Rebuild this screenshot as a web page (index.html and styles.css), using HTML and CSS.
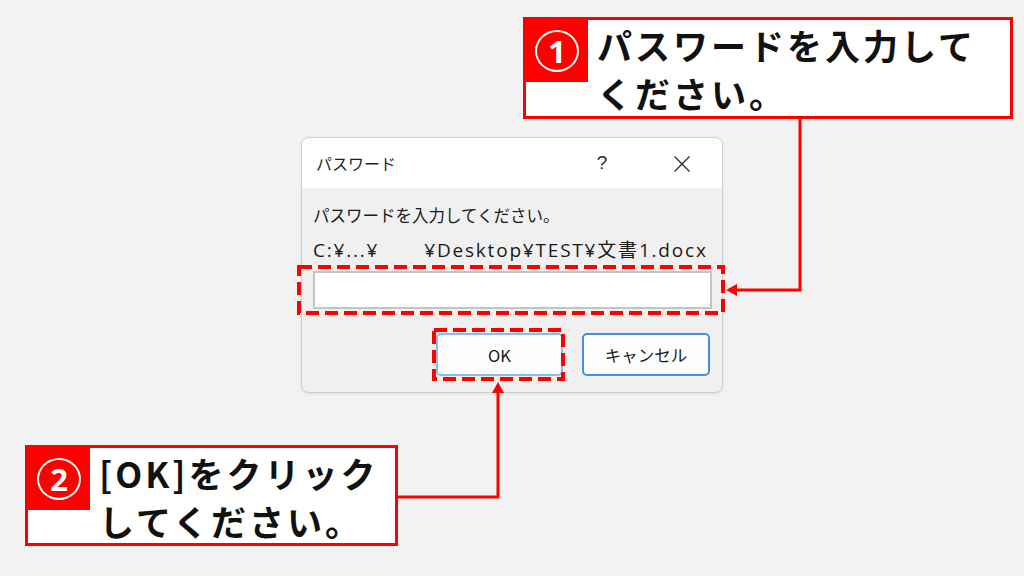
FILE: index.html
```html
<!DOCTYPE html>
<html lang="ja">
<head>
<meta charset="UTF-8">
<meta name="viewport" content="width=device-width, initial-scale=1.0">
<title>パスワード</title>
<link rel="stylesheet" href="styles.css">
</head>
<body>

<div class="stage">

  <div class="dialog">
    <div class="titlebar">
      <span class="title">パスワード</span>
      <span class="ctrl help">?</span>
      <span class="ctrl close">
        <svg width="18" height="18" viewBox="0 0 18 18">
          <path d="M1.5 1.5 L16.5 16.5 M16.5 1.5 L1.5 16.5" stroke="#2b2b2b" stroke-width="1.4" fill="none"/>
        </svg>
      </span>
    </div>
    <div class="content">
      <p class="msg">パスワードを入力してください。</p>
      <p class="msg path">C:¥...¥<span class="hidden-user">¥Desktop¥TEST¥文書1.docx</span></p>
      <input type="password" class="pw-field">
      <div class="buttons">
        <button class="btn btn-ok">OK</button>
        <button class="btn btn-cancel">キャンセル</button>
      </div>
    </div>
  </div>

  <div class="callout callout-1">
    <div class="badge"><span class="num">1</span></div>
    <p class="callout-text">パスワードを入力して<br>ください。</p>
  </div>

  <div class="callout callout-2">
    <div class="badge"><span class="num">2</span></div>
    <p class="callout-text">[OK]をクリック<br>してください。</p>
  </div>

  <!-- annotation marks over the dialog -->
  <svg class="marks" width="1024" height="576" viewBox="0 0 1024 576">
    <rect x="299" y="267" width="424" height="46" fill="none" stroke="#ff0000" stroke-width="4" stroke-dasharray="13 6"/>
    <rect x="434" y="330" width="129" height="49" fill="none" stroke="#ff0000" stroke-width="4" stroke-dasharray="13 6"/>

    <polyline points="800,119 800,290 734,290" fill="none" stroke="#ff0000" stroke-width="3"/>
    <polygon points="726,290 737,284 737,296" fill="#ff0000"/>

    <polyline points="398,497 498,497 498,390" fill="none" stroke="#ff0000" stroke-width="3"/>
    <polygon points="498,382 492,393 504,393" fill="#ff0000"/>
  </svg>

</div>

</body>
</html>
```

FILE: styles.css
```css
* {
  padding: 0;
  margin: 0;
  box-sizing: border-box;
}

body {
  background-color: #f2f2f2;
  font-family: "Noto Sans CJK JP", "Noto Sans", sans-serif;
}

.stage {
  position: relative;
  width: 1024px;
  height: 576px;
  overflow: hidden;
  padding: 137px 0 0 301px;
}

/* dialog */

.dialog {
  width: 422px;
  height: 256px;
  border: 1px solid #cfcfcf;
  border-radius: 8px;
  background-color: #f0f0f0;
  overflow: hidden;
  box-shadow: 0 1px 3px rgba(0, 0, 0, 0.08);
}

.titlebar {
  height: 50px;
  background-color: #fff;
  display: flex;
  align-items: center;
  padding-left: 14px;
}

.title {
  font-size: 16px;
  color: #1f1f1f;
  margin-right: auto;
}

.ctrl {
  width: 80px;
  display: flex;
  justify-content: center;
  align-items: center;
  color: #2b2b2b;
}

.help {
  font-size: 19px;
  font-family: "Liberation Sans", sans-serif;
}

.close svg {
  display: block;
  margin-top: 2px;
}

.content {
  padding: 10px 10px 0 11px;
}

.msg {
  font-size: 16.5px;
  line-height: 35px;
  color: #1a1a1a;
  white-space: nowrap;
}

.path {
  font-family: "Open Sans", "Noto Sans CJK JP", sans-serif;
  font-size: 19px;
  letter-spacing: 1.8px;
}

.hidden-user {
  margin-left: 45px;
}

.pw-field {
  display: block;
  width: 399px;
  height: 38px;
  margin-top: 3px;
  border: 2px solid #c4c4c4;
  background-color: #fff;
  outline: none;
}

.buttons {
  display: flex;
  justify-content: flex-end;
  gap: 19px;
  margin-top: 24px;
  padding-right: 2px;
}

.btn {
  height: 43px;
  border-radius: 5px;
  background-color: #fdfdfd;
  font-family: "Noto Sans CJK JP", sans-serif;
  font-size: 16.5px;
  color: #1a1a1a;
}

.btn-ok {
  width: 127px;
  border: 2px solid #8dbbe6;
}

.btn-cancel {
  width: 128px;
  border: 2px solid #4a8fd4;
}

/* callouts */

.callout {
  position: absolute;
  display: flex;
  align-items: flex-start;
  background-color: #fff;
  border: 3px solid #ff0000;
}

.callout-1 {
  left: 523px;
  top: 17px;
  width: 490px;
  height: 102px;
}

.callout-2 {
  left: 25px;
  top: 445px;
  width: 373px;
  height: 101px;
}

.badge {
  flex: none;
  width: 62px;
  height: 62px;
  background-color: #ff0000;
  display: flex;
  justify-content: center;
  align-items: center;
}

.num {
  width: 44px;
  height: 42px;
  border: 2px solid #fff;
  border-radius: 50%;
  color: #fff;
  font-size: 31px;
  font-weight: 700;
  line-height: 38px;
  text-align: center;
  font-family: "Noto Sans", sans-serif;
}

.callout-text {
  padding: 1px 0 0 9px;
  font-size: 35px;
  font-weight: 700;
  line-height: 48px;
  letter-spacing: 3px;
  color: #111;
  white-space: nowrap;
}

.marks {
  position: absolute;
  left: 0;
  top: 0;
  pointer-events: none;
}
```
